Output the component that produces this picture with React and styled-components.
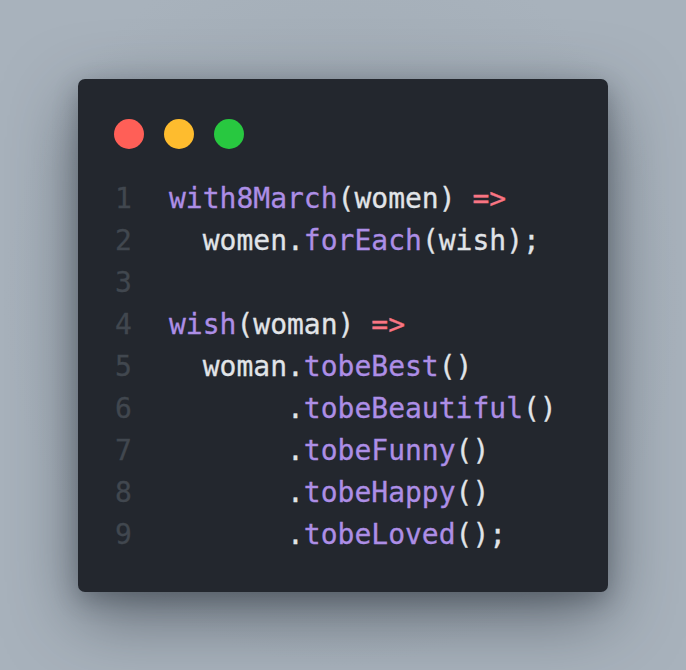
import React from 'react';
import styled, { createGlobalStyle } from 'styled-components';

const GlobalStyle = createGlobalStyle`
  html, body {
    margin: 0;
    padding: 0;
    background: #a8b2bc;
  }
`;

const lines = [
  [['fn', 'with8March'], ['plain', '(women) '], ['op', '=>']],
  [['plain', '  women.'], ['fn', 'forEach'], ['plain', '(wish);']],
  [],
  [['fn', 'wish'], ['plain', '(woman) '], ['op', '=>']],
  [['plain', '  woman.'], ['fn', 'tobeBest'], ['plain', '()']],
  [['plain', '       .'], ['fn', 'tobeBeautiful'], ['plain', '()']],
  [['plain', '       .'], ['fn', 'tobeFunny'], ['plain', '()']],
  [['plain', '       .'], ['fn', 'tobeHappy'], ['plain', '()']],
  [['plain', '       .'], ['fn', 'tobeLoved'], ['plain', '();']],
];

const App = () => {
  return (
    <>
      <GlobalStyle />
      <Page>
        <Window>
          <Dots>
            <Dot color='#ff5f57' />
            <Dot color='#febc2e' />
            <Dot color='#28c840' />
          </Dots>
          <Code>
            {lines.map((tokens, i) => (
              <Line key={i}>
                <LineNo>{i + 1}</LineNo>
                <Text>
                  {tokens.map(([kind, value], j) => (
                    <Token key={j} kind={kind}>{value}</Token>
                  ))}
                </Text>
              </Line>
            ))}
          </Code>
        </Window>
      </Page>
    </>
  );
};

const Page = styled.div`
  height: 670px;
  width: 686px;
  display: flex;
  justify-content: center;
  align-items: center;
  background: radial-gradient(ellipse at 50% 45%, #9ea8b1 0%, #a8b2bc 70%);
`;

const Window = styled.div`
  width: 530px;
  height: 513px;
  box-sizing: border-box;
  padding: 40px 36px 0 36px;
  background-color: #23272e;
  border-radius: 7px;
  box-shadow: 0 24px 70px rgba(36, 44, 52, 0.55), 0 8px 24px rgba(36, 44, 52, 0.3);
  display: flex;
  flex-direction: column;
  gap: 29px;
`;

const Dots = styled.div`
  display: flex;
  gap: 20px;
`;

const Dot = styled.span`
  width: 30px;
  height: 30px;
  border-radius: 50%;
  background-color: ${(p) => p.color};
`;

const Code = styled.div`
  display: flex;
  flex-direction: column;
  font-family: 'DejaVu Sans Mono', monospace;
  font-size: 28px;
  line-height: 42px;
  -webkit-text-stroke: 0.3px currentColor;
`;

const Line = styled.div`
  display: flex;
  height: 42px;
`;

const LineNo = styled.span`
  width: 54px;
  padding-left: 1px;
  color: #41474f;
`;

const Text = styled.span`
  white-space: pre;
  color: #e1e4e8;
`;

const colors = {
  fn: '#ad8ee6',
  op: '#f97583',
  plain: '#e1e4e8',
};

const Token = styled.span`
  color: ${(p) => colors[p.kind]};
`;

export default App;
